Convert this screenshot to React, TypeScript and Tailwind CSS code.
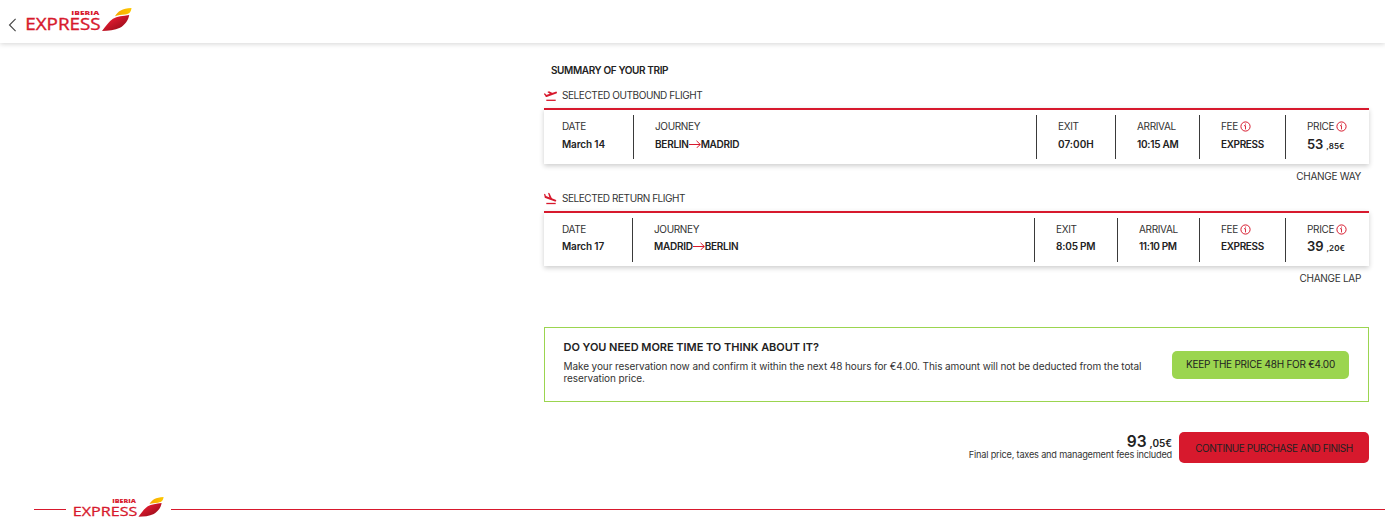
import React from "react";

function Logo({ className }: { className: string }) {
  return (
    <svg viewBox="0 0 106 24" className={`overflow-visible ${className}`} role="img" aria-label="Iberia Express">
      <defs>
        <linearGradient id="wing" x1="0" y1="0" x2="1" y2="1">
          <stop offset="0.35" stopColor="#d7192d" />
          <stop offset="0.75" stopColor="#a50f1e" />
        </linearGradient>
        <linearGradient id="tip" x1="0" y1="0" x2="1" y2="0">
          <stop offset="0" stopColor="#f7a600" />
          <stop offset="1" stopColor="#fdc800" />
        </linearGradient>
      </defs>
      <text x="45.3" y="6.6" textLength="28" lengthAdjust="spacingAndGlyphs" fontSize="5.8" fontWeight="800" fill="#d7192d" className="font-['Open_Sans',sans-serif]">IBERIA</text>
      <text x="-0.8" y="22" textLength="75.5" lengthAdjust="spacingAndGlyphs" fontSize="15.6" fontWeight="500" fill="#d7192d" stroke="#d7192d" strokeWidth="0.35" className="font-['Open_Sans',sans-serif]">EXPRESS</text>
      <path d="M76 23 C80 18 83 13.500 87 10.800 C91 8.400 97 8 103.200 7 C102.500 12 99 17 94 19.800 C89 22.300 82 23 76 23Z" fill="url(#wing)" />
      <path d="M89 8.200 C92 3.500 96 0.300 105.500 0 C105 3.500 103.800 6 99 6.600 C95 7.100 92 7.200 89 8.200Z" fill="url(#tip)" />
    </svg>
  );
}

function TakeoffIcon() {
  return (
    <svg viewBox="0 0 13 13" className="size-[13px] -translate-y-px" fill="none" stroke="#d7192d" strokeLinecap="round">
      <path d="M2.400 7 12 3.600" strokeWidth="1.900" />
      <path d="M0.700 5 2.400 7" strokeWidth="1.300" />
      <path d="M3.300 2.900 5 2.300 9.600 4.400 6.800 5.400Z" fill="#d7192d" stroke="none" />
      <path d="M2.300 11.300h9.400" strokeWidth="1.300" strokeLinecap="butt" />
    </svg>
  );
}

function LandingIcon() {
  return (
    <svg viewBox="0 0 13 13" className="size-[13px] -translate-y-px" fill="none" stroke="#d7192d" strokeLinecap="round">
      <path d="M1.600 5 11.300 8.600" strokeWidth="1.900" />
      <path d="M0.700 2.500 1.500 5" strokeWidth="1.300" />
      <path d="M4 0.700 5.500 1.200 8.400 7.500 5.700 6.500Z" fill="#d7192d" stroke="none" />
      <path d="M2.300 11.500h9.400" strokeWidth="1.300" strokeLinecap="butt" />
    </svg>
  );
}

function InfoIcon() {
  return (
    <svg viewBox="0 0 11 11" className="size-[11px] shrink-0" fill="none" stroke="#d7192d">
      <circle cx="5.500" cy="5.500" r="4.600" strokeWidth="1" />
      <path d="M5.500 2.600v1M4 4.700h1.500v3.700" strokeWidth="0.900" />
    </svg>
  );
}

function Arrow() {
  return (
    <svg viewBox="0 0 12 8" className="h-2 w-3 shrink-0" fill="none" stroke="#d7192d" strokeWidth="1">
      <path d="M0 4.500h11.300M7.500 0.800 11.300 4.500 7.500 8" />
    </svg>
  );
}

type Flight = {
  title: string;
  titleTracking: string;
  Icon: () => React.ReactElement;
  grid: string;
  valueGap: string;
  date: string;
  from: string;
  to: string;
  exit: string;
  exitTracking: string;
  arrival: string;
  arrivalTracking: string;
  price: string;
  cents: string;
  change: string;
};

const flights: Flight[] = [
  {
    title: "SELECTED OUTBOUND FLIGHT",
    titleTracking: "tracking-[-0.41px]",
    Icon: TakeoffIcon,
    grid: "grid-cols-[89px_403px_79px_84px_86px_84px] h-[54px] pt-[5px]",
    valueGap: "mt-[2.5px]",
    date: "March 14",
    from: "BERLIN",
    to: "MADRID",
    exit: "07:00H",
    exitTracking: "tracking-[0.02px]",
    arrival: "10:15 AM",
    arrivalTracking: "tracking-[-0.26px]",
    price: "53",
    cents: ",85€",
    change: "CHANGE WAY",
  },
  {
    title: "SELECTED RETURN FLIGHT",
    titleTracking: "tracking-[-0.43px]",
    Icon: LandingIcon,
    grid: "grid-cols-[88px_402px_83px_82px_86px_84px] h-[53px] pt-[5px]",
    valueGap: "mt-[1.5px]",
    date: "March 17",
    from: "MADRID",
    to: "BERLIN",
    exit: "8:05 PM",
    exitTracking: "tracking-[-0.18px]",
    arrival: "11:10 PM",
    arrivalTracking: "tracking-[-0.38px]",
    price: "39",
    cents: ",20€",
    change: "CHANGE LAP",
  },
];

function Cell({ label, info, first, gap, children }: { label: string; info?: boolean; first?: boolean; gap: string; children: React.ReactNode }) {
  return (
    <div className={first ? "pl-[18px] pt-[4px]" : "h-[44px] border-l border-[#3a3a3a] pl-[21px] pt-[4px]"}>
      <div className="flex h-[15px] items-center gap-[2px] tracking-[-0.34px] text-[#333]">
        <span>{label}</span>
        {info && <InfoIcon />}
      </div>
      <div className={`flex h-[15px] items-center font-semibold text-[#222] ${gap}`}>{children}</div>
    </div>
  );
}

function FlightSection({ flight: f }: { flight: Flight }) {
  const { Icon } = f;
  return (
    <section>
      <h3 className="flex h-5 items-center text-[#333]">
        <Icon />
        <span className={`ml-[5px] -translate-y-px ${f.titleTracking}`}>{f.title}</span>
      </h3>
      <div className="mt-[2px] border-t-2 border-[#d7192d] bg-white shadow-[0_2px_5px_rgba(0,0,0,0.2)]">
        <div className={`grid items-start ${f.grid}`}>
          <Cell label="DATE" first gap={f.valueGap}><span className="tracking-[-0.14px]">{f.date}</span></Cell>
          <Cell label="JOURNEY" gap={f.valueGap}>
            <span className="tracking-[-0.26px]">{f.from}</span>
            <Arrow />
            <span className="tracking-[-0.26px]">{f.to}</span>
          </Cell>
          <Cell label="EXIT" gap={f.valueGap}><span className={f.exitTracking}>{f.exit}</span></Cell>
          <Cell label="ARRIVAL" gap={f.valueGap}><span className={f.arrivalTracking}>{f.arrival}</span></Cell>
          <Cell label="FEE" info gap={f.valueGap}><span className="tracking-[-0.35px]">EXPRESS</span></Cell>
          <Cell label="PRICE" info gap={f.valueGap}>
            <span className="text-[13px] tracking-[-0.1px]">{f.price}</span>
            <span className="ml-[3px] mt-[4px] text-[8px] tracking-[0.1px]">{f.cents}</span>
          </Cell>
        </div>
      </div>
      <div className="flex h-[25px] items-center justify-end pr-2 tracking-[-0.3px] text-[#333]">{f.change}</div>
    </section>
  );
}

export default function App() {
  return (
    <div className="flex h-[521px] flex-col overflow-hidden bg-white font-['Inter',sans-serif] text-[10px] leading-[13px] whitespace-nowrap text-[#222]">
      <header className="flex h-[43px] shrink-0 items-start bg-white pl-2 shadow-[0_1px_5px_rgba(0,0,0,0.17)]">
        <svg viewBox="0 0 9 14" className="mt-[18px] h-[14px] w-[9px]" fill="none" stroke="#444" strokeWidth="1.100">
          <path d="M7.600 0.800 1.500 7l6.100 6.200" />
        </svg>
        <Logo className="ml-[9px] mt-2 h-6 w-[106px]" />
      </header>

      <main className="ml-[544px] w-[825px] pt-[21px]">
        <h2 className="mb-[9px] pl-[7px] font-semibold tracking-[-0.38px]">SUMMARY OF YOUR TRIP</h2>
        <FlightSection flight={flights[0]} />
        <FlightSection flight={flights[1]} />

        <section className="mt-[36px] flex h-[75px] justify-between border border-[#9bd54f] pl-[18.5px] pr-[19px]">
          <div className="pt-[12px]">
            <h3 className="text-[11px] font-semibold leading-[14px] tracking-[-0.04px]">DO YOU NEED MORE TIME TO THINK ABOUT IT?</h3>
            <p className="mt-[6px] w-[592px] whitespace-normal leading-[12px] tracking-[-0.09px] text-[#333]">
              Make your reservation now and confirm it within the next 48 hours for €4.00. This amount will not be deducted from the total reservation price.
            </p>
          </div>
          <button className="mt-[23px] h-7 w-[177px] rounded-[5px] bg-[#9bd54f] pb-px tracking-[-0.25px] text-[#222]">KEEP THE PRICE 48H FOR €4.00</button>
        </section>

        <section className="mt-[30px] flex justify-end gap-[7px]">
          <div className="pt-[1px] text-right">
            <div className="flex h-[16px] items-baseline justify-end font-semibold text-[#222]">
              <span className="text-[15.5px] leading-[17px]">93</span>
              <span className="ml-[3px] tracking-[-0.05px]">,05€</span>
            </div>
            <div className="text-[9.2px] leading-[11px] tracking-[-0.2px] text-[#333]">Final price, taxes and management fees included</div>
          </div>
          <button className="h-[31px] w-[190px] rounded-[5px] bg-[#d7192d] pt-[2px] tracking-[-0.43px] text-[#222]">CONTINUE PURCHASE AND FINISH</button>
        </section>
      </main>

      <footer className="mt-[34px] flex shrink-0 items-start pl-[34px]">
        <span className="mt-3 h-px w-8 bg-[#d7192d]" />
        <Logo className="mr-[7px] ml-[6.5px] h-[20.500px] w-[91.500px]" />
        <span className="mt-3 h-px flex-1 bg-[#d7192d]" />
      </footer>
    </div>
  );
}
